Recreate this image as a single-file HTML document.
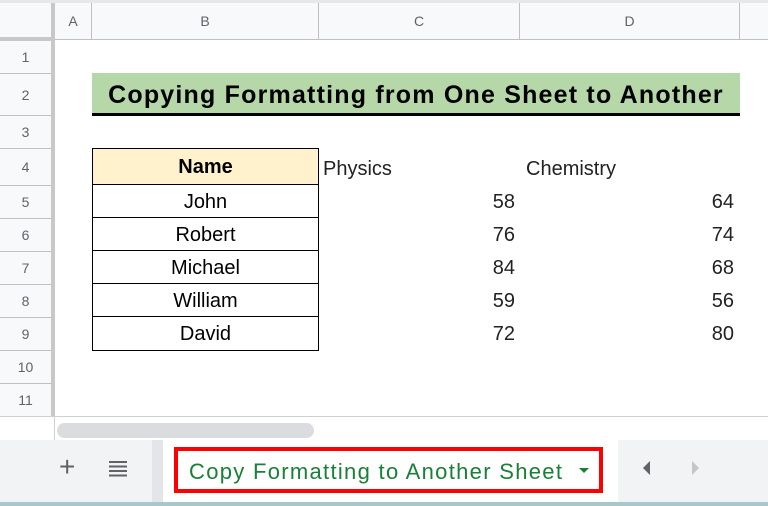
<!DOCTYPE html>
<html><head><style>
*{margin:0;padding:0;box-sizing:border-box}
body{width:768px;height:506px;background:#fff;position:relative;overflow:hidden;font-family:"Liberation Sans",Arial,sans-serif}
.a{position:absolute}
.hd{background:#f8f9fa;color:#5f6368;font-size:14px;text-align:center;border-right:1px solid #c0c0c0;border-bottom:1px solid #c0c0c0}
.rn{background:#f8f9fa;color:#5f6368;font-size:14px;text-align:center;border-bottom:1px solid #c0c0c0;left:0;width:51px}
.t{font-size:20px;color:#000;text-align:center}
.n{font-size:20px;color:#222;text-align:right}
</style></head><body>
<div class="a" style="left:0;top:0;width:768px;height:3px;background:#e8e8e8"></div>
<div class="a" style="left:0;top:3px;width:51px;height:37px;background:#f8f9fa;border-bottom:1px solid #c0c0c0"></div>
<div class="a" style="left:51px;top:3px;width:4px;height:413px;background:#c8c8c8"></div>
<div class="a" style="left:0;top:37px;width:55px;height:4px;background:#c8c8c8"></div>
<div class="a hd" style="left:55px;top:3px;width:37px;height:37px;line-height:37px">A</div>
<div class="a hd" style="left:92px;top:3px;width:227px;height:37px;line-height:37px">B</div>
<div class="a hd" style="left:319px;top:3px;width:201px;height:37px;line-height:37px">C</div>
<div class="a hd" style="left:520px;top:3px;width:220px;height:37px;line-height:37px">D</div>
<div class="a hd" style="left:740px;top:3px;width:28px;height:37px;border-right:none"></div>

<div class="a rn" style="top:41px;height:33px;line-height:33px">1</div>
<div class="a rn" style="top:74px;height:42px;line-height:42px">2</div>
<div class="a rn" style="top:116px;height:33px;line-height:33px">3</div>
<div class="a rn" style="top:149px;height:37px;line-height:37px">4</div>
<div class="a rn" style="top:186px;height:33px;line-height:33px">5</div>
<div class="a rn" style="top:219px;height:33px;line-height:33px">6</div>
<div class="a rn" style="top:252px;height:33px;line-height:33px">7</div>
<div class="a rn" style="top:285px;height:33px;line-height:33px">8</div>
<div class="a rn" style="top:318px;height:33px;line-height:33px">9</div>
<div class="a rn" style="top:351px;height:33px;line-height:33px">10</div>
<div class="a rn" style="top:384px;height:33px;line-height:33px">11</div>

<div class="a" style="left:92px;top:73px;width:648px;height:40px;background:#b6d7a8;font-weight:bold;font-size:25px;letter-spacing:1.2px;line-height:44px;text-align:center;color:#000;white-space:nowrap">Copying Formatting from One Sheet to Another</div>
<div class="a" style="left:92px;top:113px;width:648px;height:3px;background:#000"></div>

<div class="a" style="left:92px;top:148px;width:227px;height:203px;border:1px solid #000"></div>
<div class="a t" style="left:93px;top:149px;width:225px;height:36px;background:#fff2cc;font-weight:bold;line-height:36px;border-bottom:1px solid #000">Name</div>
<div class="a t" style="left:93px;top:185px;width:225px;height:33px;line-height:35px;border-bottom:1px solid #000">John</div>
<div class="a t" style="left:93px;top:218px;width:225px;height:33px;line-height:35px;border-bottom:1px solid #000">Robert</div>
<div class="a t" style="left:93px;top:251px;width:225px;height:33px;line-height:35px;border-bottom:1px solid #000">Michael</div>
<div class="a t" style="left:93px;top:284px;width:225px;height:33px;line-height:35px;border-bottom:1px solid #000">William</div>
<div class="a t" style="left:93px;top:317px;width:225px;height:33px;line-height:35px">David</div>

<div class="a" style="left:323px;top:150px;font-size:20px;line-height:38px;color:#222">Physics</div>
<div class="a" style="left:526px;top:150px;font-size:20px;line-height:38px;color:#222">Chemistry</div>
<div class="a n" style="left:320px;top:186px;width:195px;line-height:33px">58<br>76<br>84<br>59<br>72</div>
<div class="a n" style="left:520px;top:186px;width:214px;line-height:33px">64<br>74<br>68<br>56<br>80</div>

<div class="a" style="left:0;top:416px;width:768px;height:1px;background:#d0d0d0"></div>
<div class="a" style="left:54px;top:416px;width:1px;height:24px;background:#d0d0d0"></div>
<div class="a" style="left:57px;top:423px;width:257px;height:15px;border-radius:8px;background:#dadce0"></div>

<div class="a" style="left:0;top:440px;width:768px;height:63px;background:#f1f3f4"></div>
<div class="a" style="left:152px;top:440px;width:11px;height:63px;background:#e3e5e8"></div>
<div class="a" style="left:163px;top:440px;width:455px;height:63px;background:#fff"></div>
<div class="a" style="left:0;top:502px;width:768px;height:4px;background:#a7c7c8"></div>
<div class="a" style="left:59px;top:452px;font-size:28px;color:#5f6368;line-height:30px">+</div>
<div class="a" style="left:109px;top:461px;width:18px;height:16px;background:repeating-linear-gradient(#5f6368 0 2px,transparent 2px 4.5px)"></div>
<div class="a" style="left:174px;top:447px;width:429px;height:46px;border:4px solid #f00"></div>
<div class="a" style="left:189px;top:456px;font-size:22px;letter-spacing:1.3px;color:#188038;line-height:32px;white-space:nowrap">Copy Formatting to Another Sheet</div>
<div class="a" style="left:579px;top:468px;width:0;height:0;border-left:5px solid transparent;border-right:5px solid transparent;border-top:5px solid #188038"></div>
<div class="a" style="left:643px;top:461px;width:0;height:0;border-top:7px solid transparent;border-bottom:7px solid transparent;border-right:7px solid #5f6368"></div>
<div class="a" style="left:692px;top:461px;width:0;height:0;border-top:7px solid transparent;border-bottom:7px solid transparent;border-left:7px solid #c4c7c5"></div>
</body></html>
